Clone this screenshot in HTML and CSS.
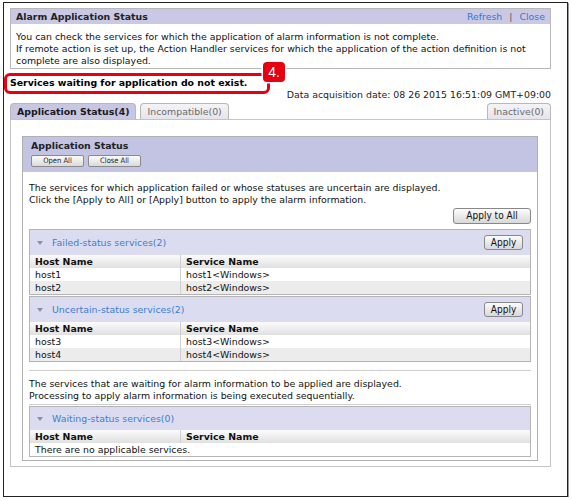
FILE: index.html
```html
<!DOCTYPE html>
<html>
<head>
<meta charset="utf-8">
<link rel="stylesheet" href="styles.css">
</head>
<body>
<div class="frame">
  <div class="content">
    <div class="status-box">
      <div class="status-head">
        <span class="status-title">Alarm Application Status</span>
        <span class="links"><a class="link">Refresh</a><span class="sep">|</span><a class="link">Close</a></span>
      </div>
      <div class="status-body">
        <div>You can check the services for which the application of alarm information is not complete.</div>
        <div>If remote action is set up, the Action Handler services for which the application of the action definition is not</div>
        <div>complete are also displayed.</div>
      </div>
    </div>

    <div class="msg">Services waiting for application do not exist.<span class="callout"></span><span class="badge">4.</span></div>
    <div class="date">Data acquisition date: 08 26 2015 16:51:09 GMT+09:00</div>

    <div class="tabs">
      <div class="tab tab-active">Application Status(4)</div>
      <div class="tab">Incompatible(0)</div>
      <div class="tab tab-right">Inactive(0)</div>
    </div>

    <div class="tab-body">
      <div class="panel">
        <div class="panel-head">
          <div class="panel-title">Application Status</div>
          <div class="panel-buttons">
            <button class="btn-small">Open All</button>
            <button class="btn-small">Close All</button>
          </div>
        </div>
        <div class="panel-body">
          <div class="para">
            <div>The services for which application failed or whose statuses are uncertain are displayed.</div>
            <div>Click the [Apply to All] or [Apply] button to apply the alarm information.</div>
          </div>
          <div class="apply-all-row"><button class="btn">Apply to All</button></div>

          <div class="section">
            <div class="section-head">
              <span class="toggle"><span class="tri"></span>Failed-status services(2)</span>
              <button class="btn btn-apply">Apply</button>
            </div>
            <table class="grid">
              <tr><th class="c1">Host Name</th><th>Service Name</th></tr>
              <tr><td class="c1">host1</td><td>host1&lt;Windows&gt;</td></tr>
              <tr class="alt"><td class="c1">host2</td><td>host2&lt;Windows&gt;</td></tr>
            </table>
          </div>

          <div class="section section-next">
            <div class="section-head">
              <span class="toggle"><span class="tri"></span>Uncertain-status services(2)</span>
              <button class="btn btn-apply">Apply</button>
            </div>
            <table class="grid">
              <tr><th class="c1">Host Name</th><th>Service Name</th></tr>
              <tr><td class="c1">host3</td><td>host3&lt;Windows&gt;</td></tr>
              <tr class="alt"><td class="c1">host4</td><td>host4&lt;Windows&gt;</td></tr>
            </table>
          </div>

          <div class="para para-waiting">
            <div>The services that are waiting for alarm information to be applied are displayed.</div>
            <div>Processing to apply alarm information is being executed sequentially.</div>
          </div>

          <div class="section section-waiting">
            <div class="section-head section-head-short">
              <span class="toggle"><span class="tri"></span>Waiting-status services(0)</span>
            </div>
            <table class="grid">
              <tr><th class="c1">Host Name</th><th>Service Name</th></tr>
              <tr><td colspan="2" class="empty">There are no applicable services.</td></tr>
            </table>
          </div>
        </div>
      </div>
    </div>
  </div>
</div>
</body>
</html>
```

FILE: styles.css
```css
html, body {
  margin: 0;
  padding: 0;
  background: #ffffff;
}

body {
  font-family: "DejaVu Sans", sans-serif;
  font-size: 9.4px;
  line-height: 12px;
  color: #111;
}

.frame {
  box-sizing: border-box;
  margin: 2px 0 0 3px;
  width: 565px;
  height: 495px;
  border: 1px solid #222;
  box-shadow: 1px 1px 0 #999;
}

.content {
  padding: 5px 16px 0 6px;
}

/* status box */
.status-box {
  border: 1px solid #b8b8b8;
}

.status-head {
  display: flex;
  justify-content: space-between;
  align-items: center;
  height: 15px;
  background: #c9c9e5;
  padding: 0 5px;
}

.status-title {
  font-weight: bold;
  color: #222;
}

.links {
  display: flex;
  align-items: center;
}

.link {
  color: #3a78c8;
}

.sep {
  color: #555;
  margin: 0 7px;
}

.status-body {
  padding: 7px 5px 0 5px;
  height: 37px;
}

/* message with annotation */
.msg {
  position: relative;
  margin-top: 8px;
  font-weight: bold;
  color: #000;
}

.callout {
  position: absolute;
  left: -6px;
  top: -4px;
  width: 266px;
  height: 21px;
  box-sizing: border-box;
  border: 3px solid #e60012;
  border-radius: 6px;
}

.badge {
  position: absolute;
  left: 253px;
  top: -15px;
  width: 22px;
  height: 20px;
  background: #e60012;
  color: #fff;
  border-radius: 4px;
  font-family: "Liberation Sans", sans-serif;
  font-weight: normal;
  font-size: 14px;
  line-height: 20px;
  text-align: center;
  box-shadow: 0 0 0 1.5px #fff;
}

.date {
  text-align: right;
  color: #222;
}

/* tabs */
.tabs {
  display: flex;
  gap: 4px;
  margin-top: 2px;
  height: 16px;
}

.tab {
  box-sizing: border-box;
  height: 16px;
  padding: 0 6px;
  border: 1px solid #b8b8b8;
  border-bottom: none;
  border-radius: 4px 4px 0 0;
  background: linear-gradient(#f4f4f8, #e4e4ea);
  color: #6a6a6a;
  line-height: 15px;
  white-space: nowrap;
}

.tab-active {
  background: #c7c7e4;
  color: #1a1a1a;
  font-weight: bold;
}

.tab-right {
  margin-left: auto;
}

.tab-body {
  border: 1px solid #c4c4c4;
  padding: 16px 12px 9px 11px;
  height: 321px;
}

/* panel */
.panel {
  border: 1px solid #b0b0b0;
}

.panel-head {
  background: #c3c3e3;
  padding: 3px 8px 5px 8px;
}

.panel-title {
  font-weight: bold;
  color: #222;
}

.panel-buttons {
  display: flex;
  gap: 4px;
  margin-top: 3px;
}

.btn-small {
  box-sizing: border-box;
  height: 12px;
  padding: 0;
  border: 1px solid #8a8a8a;
  border-radius: 2px;
  background: linear-gradient(#fbfbfb, #dadada);
  font-family: "DejaVu Sans Condensed", sans-serif;
  font-size: 7.5px;
  line-height: 10px;
  color: #222;
  width: 53px;
}

.panel-body {
  padding: 10px 6px 3px 6px;
}

.para {
  color: #111;
}

.apply-all-row {
  display: flex;
  justify-content: flex-end;
  margin-top: 2px;
}

.btn {
  box-sizing: border-box;
  height: 16px;
  padding: 0 8px;
  border: 1px solid #888;
  border-radius: 3px;
  background: linear-gradient(#fcfcfc, #d8d8d8);
  font-family: "DejaVu Sans Condensed", sans-serif;
  font-size: 10px;
  line-height: 14px;
  color: #111;
}

.apply-all-row .btn {
  width: 78px;
}

/* sections */
.section {
  margin-top: 5px;
  border: 1px solid #b4b4b4;
}

.section-next {
  margin-top: 1px;
}

.section-head {
  display: flex;
  justify-content: space-between;
  align-items: center;
  height: 25px;
  background: #dcdcf0;
  padding: 0 7px 0 7px;
}

.section-head-short {
  height: 23px;
}

.btn-apply {
  width: 39px;
  height: 15px;
  padding: 0;
  line-height: 13px;
}

.toggle {
  display: flex;
  align-items: center;
  color: #3f7ccc;
}

.tri {
  width: 0;
  height: 0;
  border-left: 3px solid transparent;
  border-right: 3px solid transparent;
  border-top: 4px solid #8890a8;
  margin-right: 9px;
}

.grid {
  width: 100%;
  border-collapse: collapse;
}

.grid th,
.grid td {
  height: 13px;
  padding: 0 5px;
  text-align: left;
  line-height: 12px;
}

.grid th {
  background: linear-gradient(#fbfbfb, #e0e0e0);
  font-weight: bold;
  color: #111;
}

.grid .c1 {
  width: 140px;
  border-right: 1px solid #d0d0d0;
}

.grid tr.alt td {
  background: #ececec;
}

.grid td.empty {
  border-right: none;
}

.para-waiting {
  margin-top: 8px;
  border-top: 1px solid #cfcfcf;
  border-bottom: 1px solid #cfcfcf;
  padding: 7px 0 2px 0;
}

.section-waiting {
  margin-top: 1px;
}
```
